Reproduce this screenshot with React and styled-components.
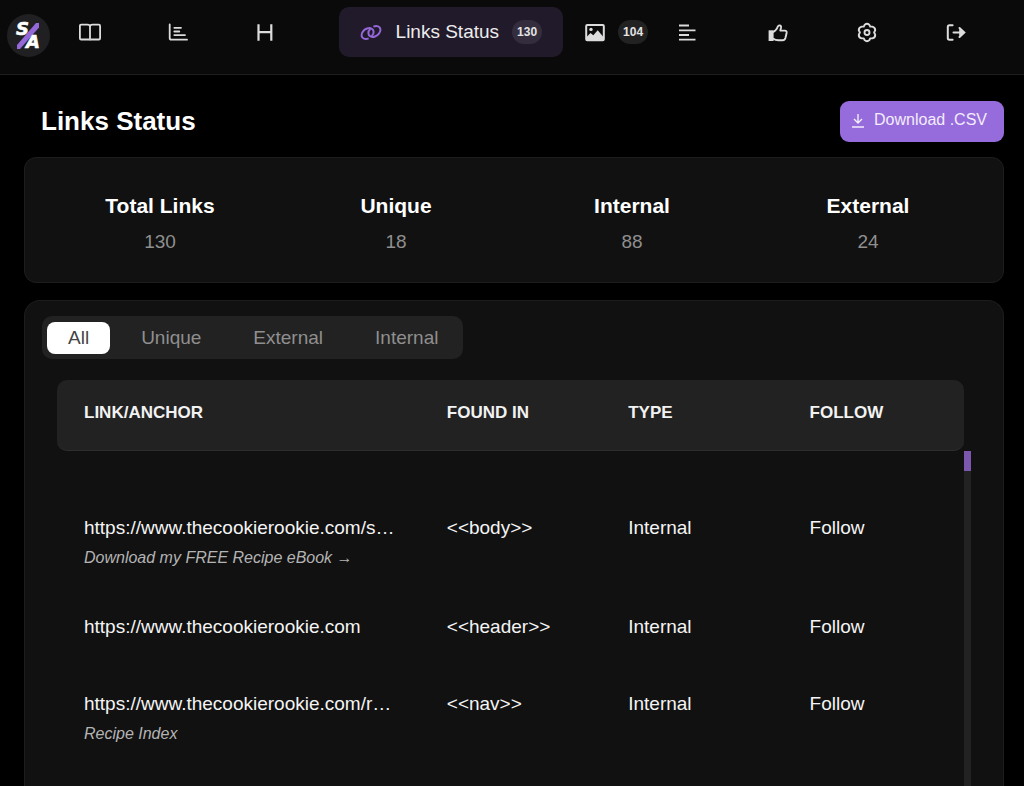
/**
 *
 * LinksStatus
 *
 */

import React, { useState } from 'react';
import styled, { createGlobalStyle } from 'styled-components';

const GlobalStyle = createGlobalStyle`
* { box-sizing: border-box; }
body {
  margin: 0;
  background: #000;
  color: #f4f4f4;
  font-family: "Liberation Sans", Arial, Helvetica, sans-serif;
  font-size: 19px;
}
button { font-family: inherit; cursor: pointer; }
`;

const Page = styled.div`
display: flex;
flex-direction: column;
min-height: 100vh;
`;

const TopBar = styled.header`
display: flex;
align-items: flex-start;
height: 75px;
padding: 7px 18px 0 7px;
background: #0a0a0a;
border-bottom: 1px solid #1e1e1e;
`;

const LogoLink = styled.a`
display: block;
height: 50px;
padding-top: 7px;
margin-right: -3px;
`;

const Nav = styled.nav`
flex: 1;
display: grid;
grid-template-columns: 88fr 90fr 88fr auto auto 80fr 104fr 78fr 102fr;
`;

const NavButton = styled.button`
display: flex;
align-items: center;
justify-content: center;
height: 50px;
margin: 0 0 0 ${props => (props.$active ? '30px' : '0')};
padding: 0 ${props => (props.$active ? '21px' : '0')};
padding-left: ${props => (props.$wide ? '20px' : '0')};
border: 0;
border-radius: 10px;
background: ${props => (props.$active ? '#211a2b' : 'transparent')};
color: ${props => (props.$active ? '#9468d8' : '#dcdcdc')};
`;

const NavLabel = styled.span`
margin: 0 13px;
color: #ececec;
font-size: 19px;
`;

const Badge = styled.span`
min-width: 30px;
padding: 0 4px;
margin-left: ${props => (props.$spaced ? '11px' : '0')};
border-radius: 12px;
background: ${props => (props.$active ? '#332d3d' : '#222')};
color: #e4e4e4;
font-size: 12px;
font-weight: bold;
line-height: 24px;
text-align: center;
`;

const Main = styled.main`
flex: 1;
display: flex;
flex-direction: column;
padding: 26px 20px 0 24px;
`;

const TitleRow = styled.div`
display: flex;
align-items: center;
justify-content: space-between;
padding-left: 17px;
margin-bottom: 15px;
`;

const Title = styled.h1`
margin: 0;
font-size: 26px;
line-height: 41px;
color: #fff;
`;

const DownloadButton = styled.button`
display: flex;
align-items: center;
gap: 8px;
height: 41px;
padding: 0 17px 3px 10px;
border: 0;
border-radius: 9px;
background: #966bdb;
color: #f3edfc;
font-size: 16px;
`;

const StatsCard = styled.dl`
display: grid;
grid-template-columns: repeat(4, 1fr);
margin: 0 0 17px;
padding: 30px 17px 22px;
background: #111;
border: 1px solid #1d1d1d;
border-radius: 12px;
text-align: center;
`;

const StatLabel = styled.dt`
font-size: 21px;
font-weight: bold;
line-height: 36px;
color: #fff;
`;

const StatValue = styled.dd`
margin: 0;
line-height: 36px;
color: #8f8f8f;
`;

const LinksCard = styled.section`
flex: 1;
display: flex;
flex-direction: column;
align-items: flex-start;
padding: 15px 32px 0 17px;
background: #111;
border: 1px solid #1d1d1d;
border-bottom: 0;
border-radius: 16px 16px 0 0;
`;

const Tabs = styled.div`
display: flex;
gap: 10px;
padding: 6px 4px 5px 5px;
background: #222;
border-radius: 10px;
`;

const Tab = styled.button`
height: 32px;
padding: 0 21px;
border: 0;
border-radius: 8px;
background: ${props => (props.$active ? '#fff' : 'transparent')};
color: ${props => (props.$active ? '#444' : '#8f8f8f')};
font-size: 19px;
`;

const TableArea = styled.div`
flex: 1;
align-self: stretch;
display: grid;
grid-template-columns: 1fr 7px;
margin: 21px 0 0 15px;
`;

const Table = styled.table`
align-self: start;
width: 100%;
table-layout: fixed;
border-collapse: separate;
border-spacing: 0;
text-align: left;
`;

const HeadCell = styled.th`
width: ${props => props.$width};
height: 71px;
padding: 0 0 4px 27px;
background: #222;
border-bottom: 1px solid #2e2e2e;
color: #f2f2f2;
font-size: 17px;
&:first-child { border-radius: 10px 0 0 10px; }
&:last-child { border-radius: 0 10px 10px 0; }
`;

const Cell = styled.td`
height: 77px;
padding: 22px 0 17px 27px;
line-height: 33px;
vertical-align: top;
tr:first-child & { padding-top: 60px; }
`;

const Url = styled.a`
display: block;
color: inherit;
text-decoration: none;
white-space: nowrap;
`;

const Anchor = styled.em`
display: block;
color: #b4b4b4;
font-size: 16px;
line-height: 27px;
`;

const ScrollTrack = styled.div`
margin-top: 71px;
background: #222;
`;

const ScrollThumb = styled.div`
height: 20px;
background: #7b57ad;
`;

const icons = {
  book: (
    <g strokeWidth="1.8">
      <path d="M11.5 19.5H3.2Q1.9 19.5 1.9 18.2V6Q1.9 4.6 3.2 4.6H9.5Q12 4.6 12 6.5Q12 4.6 14.5 4.6H20.8Q22.1 4.6 22.1 6V18.2Q22.1 19.5 20.8 19.5H12.5" />
      <path d="M12 6V20.5" />
    </g>
  ),
  chart: (
    <g strokeWidth="1.8" strokeLinecap="round">
      <path d="M3.7 4.5V18Q3.7 19.7 5.4 19.7H21" />
      <path d="M8.3 7.8H15M8.3 11.5H13.3M8.3 15.1H19" />
    </g>
  ),
  heading: <path d="M5.5 4.2V20.8M18.3 4.2V20.8M5.5 12.2H18.3" strokeWidth="2.2" />,
  links: (
    <g strokeWidth="2">
      <path d="M9.6 18.3A6.6 4.7 -35 1 1 14.6 11.6Q14.9 14.2 12.6 16" />
      <path d="M14.4 6.7A6.6 4.7 -35 1 1 9.4 13.4Q9.1 10.8 11.4 9" />
    </g>
  ),
  image: (
    <g>
      <rect x="3.2" y="5" width="17.6" height="15.2" rx="1" strokeWidth="2" />
      <circle cx="8" cy="9.4" r="1.7" fill="currentColor" stroke="none" />
      <path d="M4 20V16.5L7.5 13L10.3 15.2L14.7 10.2L20 16.5V20Z" fill="currentColor" stroke="none" />
    </g>
  ),
  align: <path d="M4 5.5H14M4 10.3H20.5M4 15H14M4 19.7H20.5" strokeWidth="1.8" />,
  like: (
    <g>
      <path d="M2.6 10.3H7.6V21H2.6Z" fill="currentColor" stroke="none" />
      <path d="M7 12.2L9.6 10.2Q11.2 8.6 11.8 6.6Q12.4 5.1 13.8 5.4Q15.4 6 15 7.8L14.3 10.6H18.8Q21 10.8 20.6 13L19.4 18Q18.8 20.2 16.6 20.2H12.5Q9.4 20.2 7 18.4" strokeWidth="1.9" strokeLinejoin="round" />
    </g>
  ),
  cog: (
    <g strokeWidth="1.9" strokeLinejoin="round">
      <path d="M9.6 4.9Q12 2.6 14.4 4.9L15.2 6.6L17.3 6.6Q20.4 7.4 20.2 10.3L19.1 12.5L20.2 14.7Q20.4 17.6 17.3 18.4L15.2 18.4L14.4 20.1Q12 22.4 9.6 20.1L8.8 18.4L6.7 18.4Q3.6 17.6 3.8 14.7L4.9 12.5L3.8 10.3Q3.6 7.4 6.7 6.6L8.8 6.6Z" />
      <circle cx="12" cy="12.5" r="2.5" />
    </g>
  ),
  logout: (
    <g strokeWidth="2" strokeLinecap="round">
      <path d="M8.6 5.3H5.4Q3.8 5.3 3.8 7V18Q3.8 19.7 5.4 19.7H8.6" />
      <path d="M9.5 12.5H20M15.5 8L20.3 12.5L15.5 17" />
      <path d="M16 9.5L20.3 12.5L16 15.5Z" fill="currentColor" strokeWidth="1" />
    </g>
  ),
};

const navItems = [
  { name: 'book', title: 'Overview' },
  { name: 'chart', title: 'Statistics' },
  { name: 'heading', title: 'Headings' },
  { name: 'links', title: 'Links Status', count: 130, active: true },
  { name: 'image', title: 'Images', count: 104 },
  { name: 'align', title: 'Content' },
  { name: 'like', title: 'Social' },
  { name: 'cog', title: 'Settings' },
  { name: 'logout', title: 'Log out' },
];

const stats = [
  ['Total Links', 130],
  ['Unique', 18],
  ['Internal', 88],
  ['External', 24],
];

const links = [
  {
    url: 'https://www.thecookierookie.com/s…',
    anchor: 'Download my FREE Recipe eBook →',
    foundIn: '<<body>>',
    type: 'Internal',
    follow: 'Follow',
  },
  {
    url: 'https://www.thecookierookie.com',
    foundIn: '<<header>>',
    type: 'Internal',
    follow: 'Follow',
  },
  {
    url: 'https://www.thecookierookie.com/r…',
    anchor: 'Recipe Index',
    foundIn: '<<nav>>',
    type: 'Internal',
    follow: 'Follow',
  },
];

function Icon({ name }) {
  return (
    <svg width="24" height="24" viewBox="0 0 24 24" fill="none" stroke="currentColor" aria-hidden="true">
      {icons[name]}
    </svg>
  );
}

function Logo() {
  return (
    <svg width="43" height="43" viewBox="0 0 43 43" aria-hidden="true">
      <circle cx="21.5" cy="21.5" r="21.5" fill="#202023" />
      <path d="M10 31L29 9H32V13.5L13 35H10Z" fill="#9468d8" />
      <g fill="#fff" stroke="#fff" strokeWidth="0.6" fontFamily="DejaVu Sans, sans-serif" fontWeight="bold" fontStyle="italic" fontSize="18">
        <text x="9" y="21">S</text>
        <text x="19" y="34">A</text>
      </g>
    </svg>
  );
}

function DownloadIcon() {
  return (
    <svg width="16" height="16" viewBox="0 0 16 16" fill="none" stroke="currentColor" strokeWidth="1.4" aria-hidden="true">
      <path d="M8 2V10.5M4 7L8 11L12 7M2 15H14" />
    </svg>
  );
}

function NavItem(props) {
  const { name, title, count, active } = props;
  return (
    <NavButton
      type="button"
      aria-label={title}
      aria-current={active ? 'page' : undefined}
      $active={active}
      $wide={Boolean(count)}
    >
      <Icon name={name} />
      {active && <NavLabel>{title}</NavLabel>}
      {count && <Badge $active={active} $spaced={!active}>{count}</Badge>}
    </NavButton>
  );
}

function LinkRow(props) {
  return (
    <tr>
      <Cell>
        <Url href="#link">{props.url}</Url>
        {props.anchor && <Anchor>{props.anchor}</Anchor>}
      </Cell>
      <Cell>{props.foundIn}</Cell>
      <Cell>{props.type}</Cell>
      <Cell>{props.follow}</Cell>
    </tr>
  );
}

export default function App() {
  const [tab, setTab] = useState('All');

  return (
    <Page>
      <GlobalStyle />
      <TopBar>
        <LogoLink href="#home" aria-label="Home"><Logo /></LogoLink>
        <Nav>
          {navItems.map(item => <NavItem key={item.name} {...item} />)}
        </Nav>
      </TopBar>
      <Main>
        <TitleRow>
          <Title>Links Status</Title>
          <DownloadButton type="button">
            <DownloadIcon />
            Download .CSV
          </DownloadButton>
        </TitleRow>
        <StatsCard>
          {stats.map(([label, value]) => (
            <div key={label}>
              <StatLabel>{label}</StatLabel>
              <StatValue>{value}</StatValue>
            </div>
          ))}
        </StatsCard>
        <LinksCard>
          <Tabs role="tablist">
            {['All', 'Unique', 'External', 'Internal'].map(name => (
              <Tab
                key={name}
                type="button"
                role="tab"
                aria-selected={tab === name}
                $active={tab === name}
                onClick={() => setTab(name)}
              >
                {name}
              </Tab>
            ))}
          </Tabs>
          <TableArea>
            <Table>
              <thead>
                <tr>
                  <HeadCell $width="40%">LINK/ANCHOR</HeadCell>
                  <HeadCell $width="20%">FOUND IN</HeadCell>
                  <HeadCell $width="20%">TYPE</HeadCell>
                  <HeadCell $width="20%">FOLLOW</HeadCell>
                </tr>
              </thead>
              <tbody>
                {links.map(link => <LinkRow key={link.url} {...link} />)}
              </tbody>
            </Table>
            <ScrollTrack>
              <ScrollThumb />
            </ScrollTrack>
          </TableArea>
        </LinksCard>
      </Main>
    </Page>
  );
}
